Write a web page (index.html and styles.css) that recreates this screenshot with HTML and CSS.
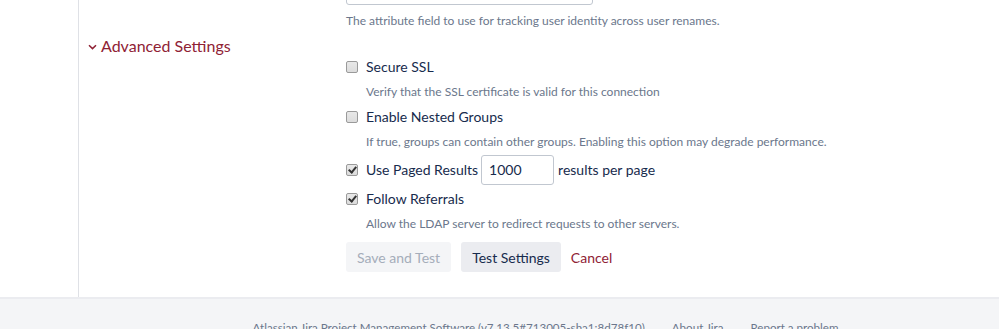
FILE: index.html
```html
<!DOCTYPE html>
<html lang="en">
<head>
  <meta charset="UTF-8" />
  <title>LDAP Directory - Advanced Settings</title>
  <link rel="stylesheet" href="styles.css">
</head>
<body>
  <div class="page">
    <div class="sidebar"></div>
    <div class="content">
      <div class="field top-field">
        <div class="text-input wide"></div>
        <div class="desc">The attribute field to use for tracking user identity across user renames.</div>
      </div>

      <div class="section">
        <h3 class="section-title">
          <svg class="chevron" width="9" height="6" viewBox="0 0 9 6"><path d="M1 1.2 L4.5 4.6 L8 1.2" fill="none" stroke="#8f2235" stroke-width="1.5"/></svg>
          Advanced Settings
        </h3>

        <div class="options">
          <div class="option">
            <label class="check-row"><span class="box"></span>Secure SSL</label>
            <div class="desc indent">Verify that the SSL certificate is valid for this connection</div>
          </div>
          <div class="option">
            <label class="check-row"><span class="box"></span>Enable Nested Groups</label>
            <div class="desc indent">If true, groups can contain other groups. Enabling this option may degrade performance.</div>
          </div>
          <div class="option paged">
            <label class="check-row"><span class="box checked"></span>Use Paged Results <span class="text-input small">1000</span> results per page</label>
          </div>
          <div class="option">
            <label class="check-row"><span class="box checked"></span>Follow Referrals</label>
            <div class="desc indent">Allow the LDAP server to redirect requests to other servers.</div>
          </div>

          <div class="buttons">
            <button class="btn disabled">Save and Test</button>
            <button class="btn">Test Settings</button>
            <a class="cancel" href="#">Cancel</a>
          </div>
        </div>
      </div>
    </div>
  </div>

  <div class="footer">
    <span>Atlassian Jira Project Management Software (v7.13.5#713005-sha1:8d78f10)</span>
    <span>About Jira</span>
    <span>Report a problem</span>
  </div>
</body>
</html>
```

FILE: styles.css
```css
* {
  margin: 0;
  padding: 0;
  box-sizing: border-box;
}
body {
  font-family: 'Lato', sans-serif;
  font-size: 14px;
  color: #172b4d;
  background: #fff;
  overflow: hidden;
}
.page {
  display: flex;
  height: 297px;
}
.sidebar {
  width: 79px;
  border-right: 1px solid #dfe1e6;
}
.content {
  flex: 1;
  padding-left: 8px;
}
.top-field {
  margin-left: 259px;
  margin-top: -26px;
}
.text-input {
  display: inline-block;
  border: 1px solid #c1c7d0;
  border-radius: 3px;
  background: #fff;
}
.text-input.wide {
  width: 247px;
  height: 31px;
}
.desc {
  font-size: 12px;
  color: #6b778c;
  line-height: 16px;
  margin-top: 5px;
}
.desc.indent {
  margin-top: 7px;
}
.section-title {
  font-size: 16px;
  font-weight: normal;
  color: #8f2235;
  margin-top: 7px;
  display: flex;
  align-items: center;
  gap: 4px;
  line-height: 20px;
}
.chevron {
  margin-top: 2px;
  margin-left: 1px;
}
.options {
  margin-left: 259px;
  margin-top: 1px;
}
.option {
  margin-bottom: 7px;
}
.option.paged {
  padding-top: 3px;
  margin-bottom: 9px;
}
.check-row {
  display: flex;
  align-items: center;
  height: 20px;
  line-height: 20px;
}
.box {
  width: 12px;
  height: 12px;
  border: 1px solid #9a9a9a;
  border-radius: 2px;
  background: linear-gradient(#e8e8e8, #dcdcdc);
  margin-right: 8px;
  position: relative;
}
.box.checked::after {
  content: "";
  position: absolute;
  left: 3px;
  top: 0px;
  width: 3px;
  height: 6px;
  border: solid #333;
  border-width: 0 2px 2px 0;
  transform: rotate(40deg);
}
.indent {
  margin-left: 20px;
}
.text-input.small {
  width: 73px;
  height: 30px;
  line-height: 28px;
  padding-left: 7px;
  margin: 0 4px 0 3px;
  color: #172b4d;
}
.buttons {
  display: flex;
  align-items: center;
  gap: 10px;
  margin-top: 10px;
}
.btn {
  font-family: inherit;
  font-size: 14px;
  border: none;
  border-radius: 3px;
  height: 30px;
  padding: 0 11px;
  background: #ebecf0;
  color: #172b4d;
}
.btn.disabled {
  background: #f4f5f7;
  color: #a5adba;
}
.cancel {
  color: #8f2235;
  text-decoration: none;
  margin-left: 0;
}
.footer {
  background: #f4f5f7;
  border-top: 2px solid #ebecf0;
  height: 40px;
  display: flex;
  justify-content: center;
  gap: 27px;
  padding-top: 22px;
  padding-left: 92px;
  font-size: 11.6px;
  color: #6b778c;
}
```
